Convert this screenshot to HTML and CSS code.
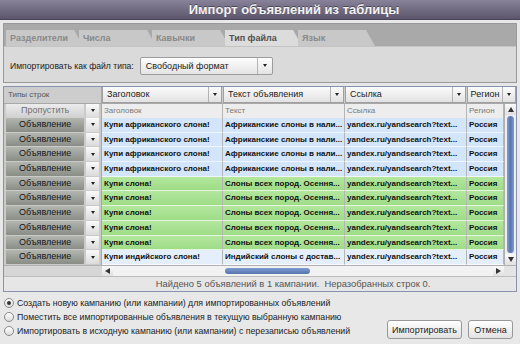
FILE: index.html
```html
<!DOCTYPE html>
<html>
<head>
  <title>Импорт объявлений из таблицы</title>
  <link rel="stylesheet" href="styles.css">
</head>
<body>
  <div class="titlebar">Импорт объявлений из таблицы</div>

  <div class="tabs">
    <div class="tab-strip">
      <span class="tab">Разделители</span>
      <span class="tab">Числа</span>
      <span class="tab">Кавычки</span>
      <span class="tab active">Тип файла</span>
      <span class="tab">Язык</span>
    </div>
    <div class="tab-body">
      <span class="label">Импортировать как файл типа:</span>
      <div class="select">
        <span class="select-text">Свободный формат</span>
        <span class="select-arrow"><i class="caret"></i></span>
      </div>
    </div>
  </div>

  <div class="sheet">
    <div class="head-row">
      <div class="types-title">Типы строк</div>
      <div class="col-select"><span>Заголовок</span><b><i class="caret"></i></b></div>
      <div class="col-select"><span>Текст объявления</span><b><i class="caret"></i></b></div>
      <div class="col-select"><span>Ссылка</span><b><i class="caret"></i></b></div>
      <div class="col-select short"><span>Регион</span><b><i class="caret"></i></b></div>
    </div>

    <div class="sheet-body">
      <div class="rows">
        <div class="row row-head">
          <div class="type"><span class="type-btn skip">Пропустить</span><span class="type-arrow"><i class="caret"></i></span></div>
          <div class="cell">Заголовок</div>
          <div class="cell">Текст</div>
          <div class="cell">Ссылка</div>
          <div class="cell">Регион</div>
        </div>
        <div class="row blue">
          <div class="type"><span class="type-btn">Объявление</span><span class="type-arrow"><i class="caret"></i></span></div>
          <div class="cell">Купи африканского слона!</div>
          <div class="cell">Африканские слоны в нали...</div>
          <div class="cell">yandex.ru/yandsearch?text...</div>
          <div class="cell">Россия</div>
        </div>
        <div class="row blue">
          <div class="type"><span class="type-btn">Объявление</span><span class="type-arrow"><i class="caret"></i></span></div>
          <div class="cell">Купи африканского слона!</div>
          <div class="cell">Африканские слоны в нали...</div>
          <div class="cell">yandex.ru/yandsearch?text...</div>
          <div class="cell">Россия</div>
        </div>
        <div class="row blue">
          <div class="type"><span class="type-btn">Объявление</span><span class="type-arrow"><i class="caret"></i></span></div>
          <div class="cell">Купи африканского слона!</div>
          <div class="cell">Африканские слоны в нали...</div>
          <div class="cell">yandex.ru/yandsearch?text...</div>
          <div class="cell">Россия</div>
        </div>
        <div class="row blue">
          <div class="type"><span class="type-btn">Объявление</span><span class="type-arrow"><i class="caret"></i></span></div>
          <div class="cell">Купи африканского слона!</div>
          <div class="cell">Африканские слоны в нали...</div>
          <div class="cell">yandex.ru/yandsearch?text...</div>
          <div class="cell">Россия</div>
        </div>
        <div class="row green">
          <div class="type"><span class="type-btn">Объявление</span><span class="type-arrow"><i class="caret"></i></span></div>
          <div class="cell">Купи слона!</div>
          <div class="cell">Слоны всех пород. Осення...</div>
          <div class="cell">yandex.ru/yandsearch?text...</div>
          <div class="cell">Россия</div>
        </div>
        <div class="row green">
          <div class="type"><span class="type-btn">Объявление</span><span class="type-arrow"><i class="caret"></i></span></div>
          <div class="cell">Купи слона!</div>
          <div class="cell">Слоны всех пород. Осення...</div>
          <div class="cell">yandex.ru/yandsearch?text...</div>
          <div class="cell">Россия</div>
        </div>
        <div class="row green">
          <div class="type"><span class="type-btn">Объявление</span><span class="type-arrow"><i class="caret"></i></span></div>
          <div class="cell">Купи слона!</div>
          <div class="cell">Слоны всех пород. Осення...</div>
          <div class="cell">yandex.ru/yandsearch?text...</div>
          <div class="cell">Россия</div>
        </div>
        <div class="row green">
          <div class="type"><span class="type-btn">Объявление</span><span class="type-arrow"><i class="caret"></i></span></div>
          <div class="cell">Купи слона!</div>
          <div class="cell">Слоны всех пород. Осення...</div>
          <div class="cell">yandex.ru/yandsearch?text...</div>
          <div class="cell">Россия</div>
        </div>
        <div class="row green">
          <div class="type"><span class="type-btn">Объявление</span><span class="type-arrow"><i class="caret"></i></span></div>
          <div class="cell">Купи слона!</div>
          <div class="cell">Слоны всех пород. Осення...</div>
          <div class="cell">yandex.ru/yandsearch?text...</div>
          <div class="cell">Россия</div>
        </div>
        <div class="row blue light">
          <div class="type"><span class="type-btn">Объявление</span><span class="type-arrow"><i class="caret"></i></span></div>
          <div class="cell">Купи индийского слона!</div>
          <div class="cell">Индийский слоны с достав...</div>
          <div class="cell">yandex.ru/yandsearch?text...</div>
          <div class="cell">Россия</div>
        </div>
      </div>
      <div class="vscroll">
        <span class="sb-btn"><i class="tri-up"></i></span>
        <span class="vthumb"></span>
        <span class="sb-btn"><i class="tri-down"></i></span>
      </div>
    </div>

    <div class="hscroll-row">
      <div class="hscroll-blank"></div>
      <div class="hscroll">
        <span class="sb-btn"><i class="tri-left"></i></span>
        <span class="hgap"></span>
        <span class="hthumb"></span>
        <span class="hfill"></span>
        <span class="sb-btn"><i class="tri-right"></i></span>
      </div>
      <div class="corner"></div>
    </div>

    <div class="status">Найдено 5 объявлений в 1 кампании.&nbsp; Неразобранных строк 0.</div>
  </div>

  <div class="footer">
    <div class="radios">
      <label class="radio"><span class="dot checked"></span>Создать новую кампанию (или кампании) для импортированных объявлений</label>
      <label class="radio"><span class="dot"></span>Поместить все импортированные объявления в текущую выбранную кампанию</label>
      <label class="radio"><span class="dot"></span>Импортировать в исходную кампанию (или кампании) с перезаписью объявлений</label>
    </div>
    <div class="buttons">
      <button class="btn import">Импортировать</button>
      <button class="btn cancel">Отмена</button>
    </div>
  </div>
</body>
</html>
```

FILE: styles.css
```css
* { margin: 0; padding: 0; box-sizing: border-box; }
body {
  font-family: 'Liberation Sans', Arial, sans-serif;
  background: #e8e8e8;
  color: #222;
  width: 520px;
  height: 344px;
  overflow: hidden;
}
.titlebar {
  height: 20px;
  background: linear-gradient(#88829a, #5c566b);
  border-bottom: 1px solid #48435a;
  color: #f2f2f2;
  font-size: 13px;
  font-weight: bold;
  line-height: 20px;
  text-align: center;
  padding-left: 68px;
  text-shadow: 0 -1px 0 rgba(0, 0, 0, 0.4);
}

/* tabs */
.tabs {
  margin: 3px 3px 0;
  border: 1px solid #999;
  background: #dadada;
}
.tab-strip {
  display: flex;
  height: 23px;
  padding: 6px 0 0 2px;
  background: #a9a9a9;
  border-bottom: 1px solid #c4c4c4;
}
.tab {
  width: 77px;
  margin-right: -4px;
  padding-left: 4px;
  background: #c8c8c8;
  color: #8a8a8a;
  font-size: 9px;
  font-weight: bold;
  line-height: 17px;
  clip-path: polygon(0 0, calc(100% - 9px) 0, 100% 100%, 0 100%);
}
.tab.active {
  background: #dcdcdc;
  color: #505050;
}
.tab-body {
  height: 35px;
  display: flex;
  align-items: center;
  padding: 2px 0 0 6px;
  gap: 6px;
}
.label { font-size: 8.6px; color: #222; }
.select {
  display: flex;
  width: 133px;
  height: 18px;
  border: 1px solid #9c9c9c;
  border-radius: 2px;
  background: linear-gradient(#fdfdfd, #e4e4e4);
  font-size: 9px;
  line-height: 16px;
}
.select-text { flex: 1; padding-left: 5px; }
.select-arrow {
  width: 15px;
  border-left: 1px solid #b4b4b4;
  display: flex;
  align-items: center;
  justify-content: center;
}
.caret {
  display: block;
  width: 0;
  height: 0;
  border-left: 2.5px solid transparent;
  border-right: 2.5px solid transparent;
  border-top: 3px solid #222;
}

/* sheet */
.sheet {
  margin: 3px 3px 0;
  border: 1px solid #8793ad;
  background: #d2d2d2;
}
.head-row {
  display: grid;
  grid-template-columns: 98px 121px 122px 122px 49px;
  height: 17px;
  background: #cdcdcd;
  border-bottom: 1px solid #a8a8a8;
}
.types-title {
  font-size: 8px;
  color: #555;
  line-height: 16px;
  padding-left: 4px;
  border-right: 1px solid #a8a8a8;
}
.col-select {
  display: flex;
  margin: 0 1px 0 0;
  border: 1px solid #a0a0a0;
  border-top: 0;
  background: linear-gradient(#fbfbfb, #e2e2e2);
  font-size: 9px;
  line-height: 15px;
}
.col-select span { flex: 1; padding-left: 4px; white-space: nowrap; overflow: hidden; }
.col-select b {
  width: 13px;
  border-left: 1px solid #b4b4b4;
  display: flex;
  align-items: center;
  justify-content: center;
}
.col-select.short { margin-right: 0; }
.col-select.short span { text-align: center; padding-left: 0; }

.sheet-body { display: flex; }
.rows { width: 500px; }
.row {
  display: grid;
  grid-template-columns: 98px 121px 122px 122px 37px;
  height: 14.7px;
}
.row-head { height: 14px; background: #ededed; }
.type {
  display: flex;
  gap: 2px;
  padding: 0 2px 1px 2px;
  background: #cacaca;
  border-right: 1px solid #a8a8a8;
}
.type-btn {
  width: 80px;
  background: linear-gradient(#b3b5af, #8a8c86);
  border-radius: 1px;
  font-size: 9px;
  line-height: 13.7px;
  text-align: center;
  color: #161616;
}
.type-btn.skip {
  background: linear-gradient(#ececec, #cfcfcf);
  color: #707070;
}
.type-arrow {
  width: 13px;
  background: linear-gradient(#fafafa, #dadada);
  display: flex;
  align-items: center;
  justify-content: center;
}
.cell {
  font-size: 8px;
  font-weight: bold;
  line-height: 13.7px;
  padding-left: 2px;
  white-space: nowrap;
  overflow: hidden;
  border-right: 1px solid #b5b5b5;
  border-bottom: 1px solid rgba(255, 255, 255, 0.65);
  color: #111;
}
.row-head .cell {
  font-weight: normal;
  color: #7a7a7a;
  line-height: 13px;
  border-bottom: 1px solid #c8c8c8;
}
.blue .cell { background: #d3e5fa; }
.blue.light .cell { background: #e4effb; }
.green .cell { background: linear-gradient(#b2e79d, #9fdc87); }

.vscroll {
  width: 12px;
  display: flex;
  flex-direction: column;
  background: #eeeeee;
  border-left: 1px solid #b0b0b0;
}
.sb-btn {
  height: 11px;
  width: 11px;
  display: flex;
  align-items: center;
  justify-content: center;
  background: linear-gradient(#fafafa, #e0e0e0);
}
.vthumb {
  flex: 1;
  margin: 1px 2px;
  border-radius: 4px;
  background: linear-gradient(to right, #7f9cd0, #5877b0, #7f9cd0);
}
.tri-up, .tri-down, .tri-left, .tri-right { display: block; width: 0; height: 0; }
.tri-up { border: 3px solid transparent; border-top: 0; border-bottom: 5px solid #333; }
.tri-down { border: 3px solid transparent; border-bottom: 0; border-top: 5px solid #333; }
.tri-left { border: 3px solid transparent; border-left: 0; border-right: 5px solid #333; }
.tri-right { border: 3px solid transparent; border-right: 0; border-left: 5px solid #333; }

.hscroll-row {
  display: flex;
  height: 11px;
  border-top: 1px solid #b0b0b0;
}
.hscroll-blank { width: 98px; background: #d6d6d6; }
.hscroll {
  flex: 1;
  display: flex;
  align-items: center;
  background: #f2f2f2;
}
.hscroll .sb-btn { height: 10px; }
.hgap { width: 112px; }
.hthumb {
  width: 85px;
  height: 6px;
  border-radius: 3px;
  background: linear-gradient(#7f9cd0, #5675ae);
}
.hfill { flex: 1; }
.corner { width: 12px; background: #e4e4e4; }
.status {
  height: 15px;
  border-top: 1px solid #bdbdbd;
  background: #e6e6e6;
  font-size: 9.4px;
  color: #555;
  line-height: 14px;
  text-align: center;
  padding-left: 66px;
}

/* bottom */
.footer {
  display: flex;
  justify-content: space-between;
  padding: 4px 7px 0 4px;
}
.radios { display: flex; flex-direction: column; }
.radio {
  display: flex;
  align-items: center;
  gap: 3px;
  height: 14.2px;
  font-size: 8.75px;
  color: #1c1c1c;
}
.dot {
  width: 10px;
  height: 10px;
  border-radius: 50%;
  border: 1px solid #8a8a8a;
  background: linear-gradient(#ffffff, #dcdcdc);
  display: flex;
  align-items: center;
  justify-content: center;
}
.dot.checked::after {
  content: "";
  width: 4px;
  height: 4px;
  border-radius: 50%;
  background: #333;
}
.buttons {
  display: flex;
  gap: 6px;
  align-self: flex-end;
  margin-bottom: -1px;
}
.btn {
  height: 19px;
  border: 1px solid #989898;
  border-radius: 3px;
  background: linear-gradient(#ffffff, #e2e2e2);
  font-family: 'Liberation Sans', Arial, sans-serif;
  font-size: 9px;
  color: #1c1c1c;
}
.btn.import { width: 75px; }
.btn.cancel { width: 45px; }
```
